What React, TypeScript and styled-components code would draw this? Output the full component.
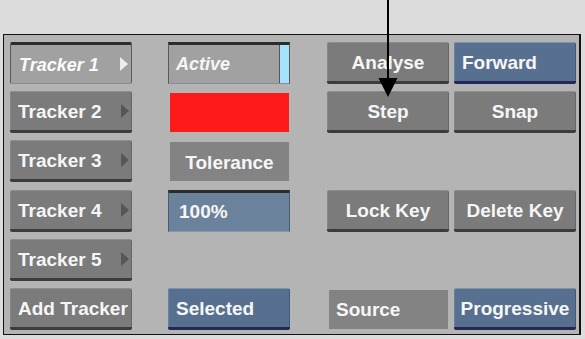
import React from "react";
import styled, { createGlobalStyle, css } from "styled-components";

const Global = createGlobalStyle`
  html, body { margin: 0; padding: 0; background: #dcdcdc; }
  body { font-family: "Liberation Sans", Arial, sans-serif; }
`;

const Page = styled.div`
  position: relative;
  width: 585px;
  height: 339px;
  background: #dcdcdc;
  padding: 34px 0 0 3px;
  box-sizing: border-box;
  overflow: hidden;
`;

const Panel = styled.div`
  width: 578px;
  height: 301px;
  box-sizing: border-box;
  background: #b4b4b4;
  border: 1px solid #111;
  border-right-width: 2px;
  display: flex;
  gap: 37px;
  padding: 7px 0 0 6px;
`;

const Group = styled.div<{ $gap: number }>`
  display: grid;
  grid-template-columns: 122px 122px;
  grid-template-rows: repeat(6, 42px);
  column-gap: ${(p) => p.$gap}px;
  row-gap: 7.2px;
`;

type Tone = "gray" | "blue" | "selected";

const Btn = styled.div<{ $tone?: Tone; $align?: "left" | "center" }>`
  box-sizing: border-box;
  height: 42px;
  display: flex;
  align-items: center;
  justify-content: ${(p) => (p.$align === "left" ? "flex-start" : "center")};
  padding: 2px ${(p) => (p.$align === "left" ? "8px" : "0")} 0;
  font-size: 19px;
  font-weight: bold;
  color: #f6f6f6;
  border-radius: 2px;
  position: relative;
  white-space: nowrap;
  ${(p) =>
    p.$tone === "blue"
      ? css`
          background: #57708f;
          border-top: 1px solid #7d93ad;
          border-bottom: 3px solid #26265a;
          box-shadow: inset 1px 0 0 #6a82a0, inset -1px 0 0 #44597a;
        `
      : p.$tone === "selected"
      ? css`
          background: #a1a1a1;
          border-top: 3px solid #2c2c2c;
          border-left: 1px solid #5a5a5a;
          border-right: 1px solid #5a5a5a;
          border-bottom: 1px solid #8c8c8c;
          font-size: 18px;
          font-style: italic;
          color: #fbfbfb;
        `
      : css`
          background: #7b7b7b;
          border-top: 1px solid #8e8e8e;
          border-bottom: 3px solid #3c3c3c;
          box-shadow: inset 1px 0 0 #868686, inset -1px 0 0 #666;
        `}
`;

const Arrow = styled.span<{ $light?: boolean }>`
  position: absolute;
  right: 3px;
  top: 50%;
  margin-top: -7px;
  width: 0;
  height: 0;
  border-top: 7px solid transparent;
  border-bottom: 7px solid transparent;
  border-left: 8px solid ${(p) => (p.$light ? "#ececec" : "#565656")};
`;

const Field = styled.div<{ $variant: "active" | "value" }>`
  box-sizing: border-box;
  height: 42px;
  display: flex;
  align-items: center;
  color: #f6f6f6;
  position: relative;
  font-weight: bold;
  ${(p) =>
    p.$variant === "active"
      ? css`
          background: #a1a1a1;
          border-top: 3px solid #2c2c2c;
          border-left: 1px solid #5a5a5a;
          border-right: 1px solid #5a5a5a;
          border-bottom: 1px solid #8c8c8c;
          font-style: italic;
          font-size: 18px;
          padding-left: 7px;
        `
      : css`
          background: #6b829c;
          border-top: 3px solid #2c2c2c;
          border-left: 1px solid #4a5a70;
          border-right: 1px solid #4a5a70;
          border-bottom: 1px solid #8396ab;
          font-size: 19px;
          padding-left: 10px;
        `}
`;

const ActiveStrip = styled.span`
  position: absolute;
  right: 0;
  top: 0;
  bottom: 0;
  width: 9px;
  background: #a2e2ff;
  border-left: 1px solid #555;
`;

const Swatch = styled.div`
  margin: 2px 1px 2px 2px;
  background: #ff1a1a;
  height: 39px;
`;

const Label = styled.div<{ $align?: "left" | "center" }>`
  box-sizing: border-box;
  margin: 2px 1px 1px 2px;
  height: 39px;
  background: #838383;
  display: flex;
  align-items: center;
  justify-content: ${(p) => (p.$align === "left" ? "flex-start" : "center")};
  padding: 2px 0 0 ${(p) => (p.$align === "left" ? "7px" : "0")};
  font-size: 19px;
  font-weight: bold;
  color: #f6f6f6;
`;

const Empty = styled.div``;

const Pointer = styled.svg`
  position: absolute;
  left: 378px;
  top: 0;
`;

export default function App() {
  return (
    <>
      <Global />
      <Page>
        <Panel>
          <Group $gap={36}>
            <Btn $tone="selected" $align="left">
              Tracker 1<Arrow $light />
            </Btn>
            <Field $variant="active">
              Active
              <ActiveStrip />
            </Field>

            <Btn $align="left">
              Tracker 2<Arrow />
            </Btn>
            <Swatch />

            <Btn $align="left">
              Tracker 3<Arrow />
            </Btn>
            <Label>Tolerance</Label>

            <Btn $align="left">
              Tracker 4<Arrow />
            </Btn>
            <Field $variant="value">100%</Field>

            <Btn $align="left">
              Tracker 5<Arrow />
            </Btn>
            <Empty />

            <Btn $align="left">Add Tracker</Btn>
            <Btn $tone="blue" $align="left">Selected</Btn>
          </Group>
          <Group $gap={5}>
            <Btn>Analyse</Btn>
            <Btn $tone="blue" $align="left">Forward</Btn>

            <Btn>Step</Btn>
            <Btn>Snap</Btn>

            <Empty />
            <Empty />

            <Btn>Lock Key</Btn>
            <Btn>Delete Key</Btn>

            <Empty />
            <Empty />

            <Label $align="left">Source</Label>
            <Btn $tone="blue">Progressive</Btn>
          </Group>
        </Panel>
        <Pointer width="22" height="100" viewBox="0 0 22 100">
          <line x1="10" y1="0" x2="10" y2="80" stroke="#000" strokeWidth="2" />
          <polygon points="0.5,78 19.5,78 10,97" fill="#000" />
        </Pointer>
      </Page>
    </>
  );
}
